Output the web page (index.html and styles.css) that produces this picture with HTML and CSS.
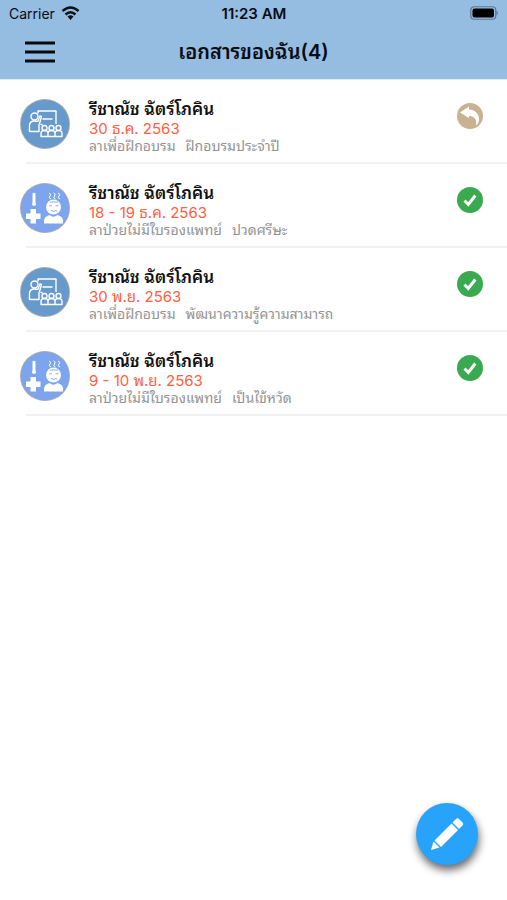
FILE: index.html
```html
<!DOCTYPE html>
<html lang="th">
<head>
<meta charset="utf-8">
<meta name="viewport" content="width=device-width, initial-scale=1">
<title>เอกสารของฉัน</title>
<link rel="stylesheet" href="styles.css">
</head>
<body>
<svg class="symbols" aria-hidden="true">
  <symbol id="training" viewBox="0 0 48 48">
    <g fill="none" stroke="#fff" stroke-width="1.4" stroke-linejoin="round" stroke-linecap="round">
      <path d="M17 13v-2h18v12.500M20 24.500h1M22 19h9"/>
      <circle cx="13.500" cy="16.500" r="3.500"/>
      <path d="M8.500 31.500v-6c0-3.500 2-4.500 5-4.500 1.500 0 2.500 1 3.500 0l2-5 1.500.5-2 7-.5 1v7z"/>
      <circle cx="23.500" cy="28" r="2.500"/><circle cx="30.500" cy="28" r="2.500"/><circle cx="37.500" cy="28" r="2.500"/>
      <path d="M20 36.500v-3c0-4 7-4 7 0v3zM27 36.500v-3c0-4 7-4 7 0v3zM34 36.500v-3c0-4 7-4 7 0v3z"/>
    </g>
  </symbol>
  <symbol id="sick" viewBox="0 0 48 48">
    <g fill="#fff">
      <path d="M11.500 9.500q1.500-1.500 3 0v9q1.500 2.500-1.500 3.500-3-1-1.500-3.500z"/>
      <path d="M9.500 25h5.500v4.500h4.500V35H15v4.500H9.500V35H5v-5.500h4.500z"/>
      <circle cx="32.500" cy="23" r="7.500"/>
      <path d="M23 39.500v-3q0-4 5.500-5.500 4 3.500 8 0 5.500 1.500 5.500 5.500v3z"/>
    </g>
    <g fill="none" stroke="#fff" stroke-width="1">
      <path d="M28 9q3 1 1 3t1 3M32.500 9q3 1 1 3t1 3M37 9q3 1 1 3t1 3"/>
    </g>
    <path d="M28 22q1.500-1 3 0M34.500 22q1.500-1 3 0M30 27q1-1 2 0t2 0 2 0M29 18h8" fill="none" stroke="#7da5ed" stroke-width=".9"/>
  </symbol>
  <symbol id="approved" viewBox="0 0 26 26">
    <circle cx="13" cy="13" r="13" fill="#3aaa50"/>
    <path d="M7.500 13.500l3.800 4 7-9" fill="none" stroke="#fff" stroke-width="3"/>
  </symbol>
  <symbol id="returned" viewBox="0 0 26 26">
    <circle cx="13" cy="13" r="13" fill="#c9b292"/>
    <path d="M3 9.500L12 3.500v3c7 .5 10 5 10 9.500 0 3-1 5-3 6.500 1-6-1-9-7-9.500v2z" fill="#fff"/>
  </symbol>
</svg>

<header class="header">
  <div class="status">
    <div class="carrier">
      <span>Carrier</span>
      <svg class="wifi" viewBox="0 0 19 14" aria-hidden="true">
        <g fill="none" stroke="#0a0f14" stroke-width="2.500"><path d="M1.500 5q8-7 16 0M4.500 8.500q5-4.500 10 0"/></g>
        <path d="M6.500 10.500q3-2.500 6 0l-3 3.500z" fill="#0a0f14"/>
      </svg>
    </div>
    <time class="clock">11:23 AM</time>
    <svg class="battery" viewBox="0 0 30 14" aria-hidden="true">
      <rect x="1.750" y=".75" width="25" height="12.500" rx="3.500" fill="none" stroke="#5d7791" stroke-width="1.200"/>
      <rect x="3.500" y="2.500" width="21.500" height="9" rx="2" fill="#000"/>
      <path d="M27.500 4.500q3 2.500 0 5z" fill="#5d7791"/>
    </svg>
  </div>
  <div class="bar">
    <button class="menu" type="button" aria-label="เมนู">
      <svg viewBox="0 0 30 22" aria-hidden="true"><path d="M0 2h30M0 11h30M0 20h30" stroke="#070b10" stroke-width="3"/></svg>
    </button>
    <h1 class="title">เอกสารของฉัน(4)</h1>
  </div>
</header>

<main>
  <ul class="list">
    <li class="row">
      <svg class="avatar training" aria-hidden="true"><use href="#training"/></svg>
      <div class="body">
        <div class="text">
          <h2 class="name">รีชาณัช ฉัตร์โภคิน</h2>
          <p class="date">30 ธ.ค. 2563</p>
          <p class="detail"><span>ลาเพื่อฝึกอบรม</span><span>ฝึกอบรมประจำปี</span></p>
        </div>
        <svg class="state" aria-hidden="true"><use href="#returned"/></svg>
      </div>
    </li>
    <li class="row">
      <svg class="avatar sick" aria-hidden="true"><use href="#sick"/></svg>
      <div class="body">
        <div class="text">
          <h2 class="name">รีชาณัช ฉัตร์โภคิน</h2>
          <p class="date">18 - 19 ธ.ค. 2563</p>
          <p class="detail"><span>ลาป่วยไม่มีใบรองแพทย์</span><span>ปวดศรีษะ</span></p>
        </div>
        <svg class="state" aria-hidden="true"><use href="#approved"/></svg>
      </div>
    </li>
    <li class="row">
      <svg class="avatar training" aria-hidden="true"><use href="#training"/></svg>
      <div class="body">
        <div class="text">
          <h2 class="name">รีชาณัช ฉัตร์โภคิน</h2>
          <p class="date">30 พ.ย. 2563</p>
          <p class="detail"><span>ลาเพื่อฝึกอบรม</span><span>พัฒนาความรู้ความสามารถ</span></p>
        </div>
        <svg class="state" aria-hidden="true"><use href="#approved"/></svg>
      </div>
    </li>
    <li class="row">
      <svg class="avatar sick" aria-hidden="true"><use href="#sick"/></svg>
      <div class="body">
        <div class="text">
          <h2 class="name">รีชาณัช ฉัตร์โภคิน</h2>
          <p class="date">9 - 10 พ.ย. 2563</p>
          <p class="detail"><span>ลาป่วยไม่มีใบรองแพทย์</span><span>เป็นไข้หวัด</span></p>
        </div>
        <svg class="state" aria-hidden="true"><use href="#approved"/></svg>
      </div>
    </li>
  </ul>
</main>

<button class="compose" type="button" aria-label="เขียนเอกสาร">
  <svg viewBox="0 0 34 34" aria-hidden="true">
    <g fill="#fff">
      <path d="M1 33l2.500-8.500 6 6z"/>
      <path d="M4.500 23.500L21.500 6.500l6.500 6.500-17 17z"/>
      <path d="M22.500 5.500l3.500-3.500q1.500-1.500 3 0l3.500 3.500q1.500 1.500 0 3l-3.500 3.500z"/>
    </g>
  </svg>
</button>
</body>
</html>
```
FILE: styles.css
```css
* {
  box-sizing: border-box;
}

body {
  margin: 0;
  min-height: 100vh;
  background: #fff;
  color: #111;
  font-family: Inter, "Noto Sans Thai Looped", "Noto Looped Thai", Loma, Garuda, Waree, "Noto Sans Thai", "Noto Sans", sans-serif;
}

h1, h2, p, ul {
  margin: 0;
  padding: 0;
}

.symbols {
  display: none;
}

.header {
  border-bottom: 1px solid #dcebf8;
  background: #95bce1;
  color: #080d12;
}

.status {
  display: grid;
  grid-template-columns: 1fr auto 1fr;
  align-items: center;
  height: 26px;
  padding: 0 8px 0 9px;
  font-size: 14px;
}

.carrier {
  display: flex;
  align-items: center;
  gap: 6px;
}

.wifi {
  width: 19px;
  height: 14px;
}

.clock {
  font-size: 15px;
  font-weight: 600;
}

.battery {
  justify-self: end;
  width: 30px;
  height: 14px;
}

.bar {
  display: grid;
  grid-template-columns: 30px 1fr 30px;
  align-items: center;
  height: 53px;
  padding: 0 25px 2px;
}

.menu {
  display: flex;
  padding: 0;
  border: 0;
  background: none;
}

.menu svg {
  width: 30px;
  height: 22px;
}

.title {
  text-align: center;
  font-size: 20px;
  font-weight: 600;
  line-height: 28px;
}

.list {
  list-style: none;
}

.row {
  display: flex;
  height: 84px;
}

.avatar {
  flex: none;
  width: 48px;
  height: 48px;
  margin: 20px 0 0 21px;
  border-radius: 50%;
  box-shadow: 0 0 0 1px #aaa9ae;
}

.training {
  background: #6699cc;
}

.sick {
  background: #7da5ed;
}

.body {
  display: flex;
  flex: 1;
  justify-content: space-between;
  min-width: 0;
  margin-left: -43px;
  padding: 20px 24px 0 63px;
  border-bottom: 2px solid #f1f1f2;
}

.text {
  min-width: 0;
  white-space: nowrap;
}

.name {
  font-size: 17px;
  font-weight: 600;
  line-height: 19px;
}

.date {
  color: #ff6040;
  font-size: 15px;
  line-height: 19px;
}

.detail {
  display: flex;
  gap: 10px;
  color: #949494;
  font-size: 14px;
  line-height: 15px;
}

.state {
  flex: none;
  width: 26px;
  height: 26px;
  margin-top: 3px;
}

.compose {
  position: fixed;
  right: 29px;
  bottom: 35px;
  display: grid;
  place-items: center;
  width: 62px;
  height: 62px;
  padding: 0;
  border: 0;
  border-radius: 50%;
  background: #27a3fb;
  box-shadow: 1px 5px 8px rgb(0 0 0 / 60%);
}

.compose svg {
  width: 34px;
  height: 34px;
}
```
